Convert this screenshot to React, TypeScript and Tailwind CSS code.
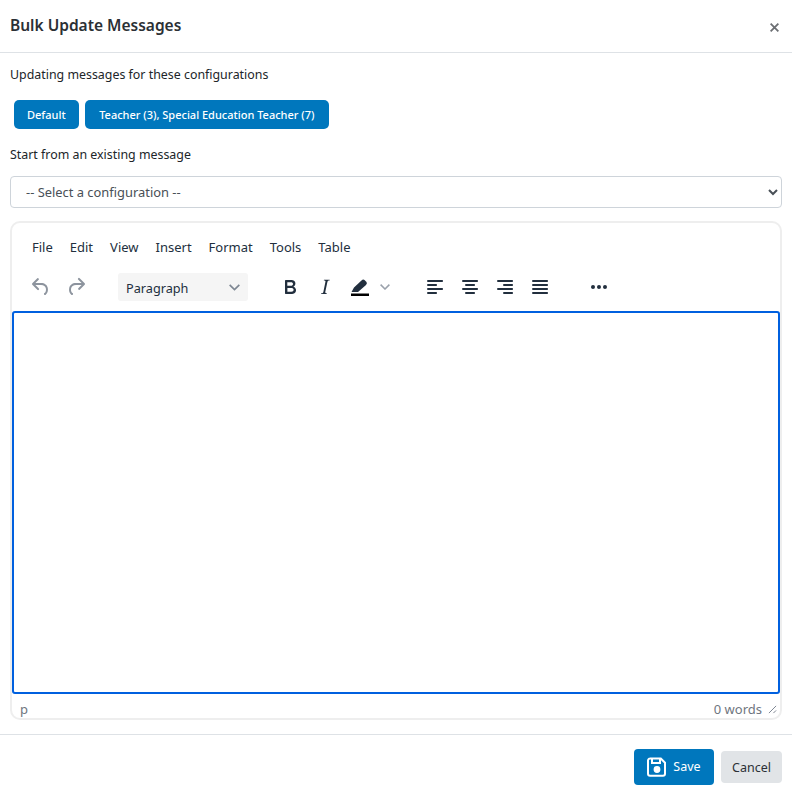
import React from "react";

const ICON_PATHS = {
  undo: "M6.4 8H12c3.7 0 6.2 2 6.8 5.1.6 2.7-.4 5.6-2.3 6.8a1 1 0 0 1-1-1.8c1.1-.6 1.8-2.7 1.4-4.6-.5-2.1-2.1-3.5-4.9-3.5H6.4l3.3 3.3a1 1 0 1 1-1.4 1.4l-5-5a1 1 0 0 1 0-1.4l5-5a1 1 0 0 1 1.4 1.4L6.4 8Z",
  redo: "M17.6 10H12c-2.8 0-4.4 1.4-4.9 3.5-.4 2 .3 4 1.4 4.6a1 1 0 1 1-1 1.8c-2-1.2-2.9-4.1-2.3-6.8.6-3 3-5.1 6.8-5.1h5.6l-3.3-3.3a1 1 0 1 1 1.4-1.4l5 5a1 1 0 0 1 0 1.4l-5 5a1 1 0 0 1-1.4-1.4l3.3-3.3Z",
  bold: "M7.8 19c-.3 0-.5 0-.6-.2l-.2-.5V5.7c0-.2 0-.4.2-.5l.6-.2h5c1.5 0 2.7.3 3.5 1 .7.6 1.1 1.4 1.1 2.5a3 3 0 0 1-.6 1.9c-.4.6-1 1-1.6 1.2.4.1.9.3 1.3.6s.8.7 1 1.2c.4.4.5 1 .5 1.6 0 1.3-.4 2.3-1.3 3-.8.7-2.1 1-3.8 1H7.8Zm5-8.3c.6 0 1.2-.1 1.6-.5.4-.3.6-.7.6-1.3 0-1.1-.8-1.7-2.3-1.7H9.3v3.5h3.4Zm.5 6c.7 0 1.3-.1 1.7-.4.4-.4.6-.9.6-1.5s-.2-1-.7-1.4c-.4-.3-1-.4-2-.4H9.4v3.8h4Z",
  italic: "M16.7 4.7l-.1.9h-.3c-.6 0-1 0-1.4.3-.3.3-.4.6-.5 1.1l-2.1 9.8v.6c0 .5.4.8 1.4.8h.2l-.2.8H8l.2-.8h.2c1.1 0 1.8-.5 2-1.5l2-9.8.1-.5c0-.6-.4-.8-1.4-.8h-.3l.2-.9h5.8Z",
  left: "M5 5h14c.6 0 1 .4 1 1s-.4 1-1 1H5a1 1 0 1 1 0-2Zm0 4h8c.6 0 1 .4 1 1s-.4 1-1 1H5a1 1 0 1 1 0-2Zm0 8h8c.6 0 1 .4 1 1s-.4 1-1 1H5a1 1 0 0 1 0-2Zm0-4h14c.6 0 1 .4 1 1s-.4 1-1 1H5a1 1 0 0 1 0-2Z",
  center: "M5 5h14c.6 0 1 .4 1 1s-.4 1-1 1H5a1 1 0 1 1 0-2Zm3 4h8c.6 0 1 .4 1 1s-.4 1-1 1H8a1 1 0 1 1 0-2Zm0 8h8c.6 0 1 .4 1 1s-.4 1-1 1H8a1 1 0 0 1 0-2Zm-3-4h14c.6 0 1 .4 1 1s-.4 1-1 1H5a1 1 0 0 1 0-2Z",
  right: "M5 5h14c.6 0 1 .4 1 1s-.4 1-1 1H5a1 1 0 1 1 0-2Zm6 4h8c.6 0 1 .4 1 1s-.4 1-1 1h-8a1 1 0 0 1 0-2Zm0 8h8c.6 0 1 .4 1 1s-.4 1-1 1h-8a1 1 0 0 1 0-2Zm-6-4h14c.6 0 1 .4 1 1s-.4 1-1 1H5a1 1 0 0 1 0-2Z",
  justify: "M5 5h14c.6 0 1 .4 1 1s-.4 1-1 1H5a1 1 0 1 1 0-2Zm0 4h14c.6 0 1 .4 1 1s-.4 1-1 1H5a1 1 0 1 1 0-2Zm0 4h14c.6 0 1 .4 1 1s-.4 1-1 1H5a1 1 0 0 1 0-2Zm0 4h14c.6 0 1 .4 1 1s-.4 1-1 1H5a1 1 0 0 1 0-2Z",
  more: "M6 10a2 2 0 0 0-2 2c0 1.1.9 2 2 2a2 2 0 0 0 2-2 2 2 0 0 0-2-2Zm12 0a2 2 0 0 0-2 2c0 1.1.9 2 2 2a2 2 0 0 0 2-2 2 2 0 0 0-2-2Zm-6 0a2 2 0 0 0-2 2c0 1.1.9 2 2 2a2 2 0 0 0 2-2 2 2 0 0 0-2-2Z",
};

const MENUS = ["File", "Edit", "View", "Insert", "Format", "Tools", "Table"];

const ToolIcon = ({ name, className }: { name: keyof typeof ICON_PATHS; className: string }) => (
  <svg viewBox="0 0 24 24" className={"w-6 h-6 shrink-0 fill-current " + className}>
    <path d={ICON_PATHS[name]} />
  </svg>
);

const Chevron = () => (
  <svg viewBox="0 0 10 6" className="w-[10px] h-[6px] shrink-0 fill-none stroke-[#9aa1ab] stroke-[1.5]">
    <path d="M.6.6 5 5 9.4.6" />
  </svg>
);

export default function App() {
  return (
    <div className="h-[793px] overflow-hidden bg-white text-[#212529] font-['Noto_Sans','Open_Sans',sans-serif]">
      {/* Header */}
      <div className="h-[53px] border-b border-[#dee2e6] flex items-start justify-between pl-[10px] pr-[13px]">
        <h2 className="mt-[13px] text-[15.5px] leading-[24px] font-semibold text-[#2b3035]">Bulk Update Messages</h2>
        <svg viewBox="0 0 10 10" className="mt-[23px] w-[9px] h-[9px] stroke-[#6c6f73] stroke-[2] fill-none">
          <path d="M.7.7l8.6 8.6M9.3.7.7 9.3" />
        </svg>
      </div>

      {/* Body */}
      <div className="h-[681px] px-[10px] flex flex-col">
        <p className="mt-[13px] text-[12.4px] leading-[18px]">Updating messages for these configurations</p>
        <div className="mt-[16px] pl-[4px] flex gap-[6px]">
          <span className="h-[29px] pt-[1px] px-[13px] rounded-[5px] bg-[#0077bd] text-white text-[11px] font-medium flex items-center">Default</span>
          <span className="h-[29px] pt-[1px] px-[14.5px] rounded-[5px] bg-[#0077bd] text-white text-[11px] font-medium flex items-center">Teacher (3), Special Education Teacher (7)</span>
        </div>
        <label className="mt-[17px] text-[12.4px] leading-[18px]">Start from an existing message</label>
        <select className="mt-[12px] w-full h-[32px] shrink-0 px-[11px] text-[12.9px] text-[#495057] bg-white border border-[#ced4da] rounded-[4px]">
          <option>-- Select a configuration --</option>
        </select>

        {/* Editor */}
        <div className="mt-[13px] h-[499px] border-2 border-[#eeeeee] rounded-[10px] flex flex-col">
          <div className="h-[88px] shrink-0">
            <div className="h-[52px] pl-[11.5px] flex items-start">
              {MENUS.map(menu => (
                <span key={menu} className="mt-[14px] px-[8.5px] text-[13px] leading-[20px] text-[#222f3e]">{menu}</span>
              ))}
            </div>
            <div className="h-[36px] flex items-start pl-[17px]">
              <ToolIcon name="undo" className="text-[#8d949e]" />
              <ToolIcon name="redo" className="ml-[11px] text-[#8d949e]" />
              <div className="ml-[30px] -mt-[2px] w-[130px] h-[28px] rounded-[3px] bg-[#f5f5f5] pl-[8px] pr-[8px] flex items-center justify-between">
                <span className="pt-[3px] text-[12.7px] text-[#222f3e]">Paragraph</span>
                <svg viewBox="0 0 10 6" className="w-[11px] h-[7px] fill-none stroke-[#7e8793] stroke-[1.5]">
                  <path d="M.6.6 5 5 9.4.6" />
                </svg>
              </div>
              <ToolIcon name="bold" className="ml-[30px] text-[#222f3e]" />
              <ToolIcon name="italic" className="ml-[11px] text-[#222f3e]" />
              <svg viewBox="0 0 24 24" className="ml-[11px] w-6 h-6 shrink-0">
                <path fill="#222f3e" d="M3.500 17 6 12.500 13.500 5.500Q15 4 16.500 5L18.500 7Q19.500 8.500 18 10L10 17H6.500Z" />
                <path fill="#000000" d="M3 18.500h18V21H3z" />
              </svg>
              <span className="ml-[8px] mt-[9px]"><Chevron /></span>
              <ToolIcon name="left" className="ml-[33px] text-[#222f3e]" />
              <ToolIcon name="center" className="ml-[11px] text-[#222f3e]" />
              <ToolIcon name="right" className="ml-[11px] text-[#222f3e]" />
              <ToolIcon name="justify" className="ml-[11px] text-[#222f3e]" />
              <ToolIcon name="more" className="ml-[35px] text-[#222f3e]" />
            </div>
          </div>
          <div className="h-[383px] shrink-0 border-2 border-[#0060df] rounded-[3px] bg-white" />
          <div className="flex-1 flex items-center justify-between pt-[6px] pl-[8px] pr-[3px] text-[13px] text-[#6f7680]">
            <span>p</span>
            <span className="flex items-center gap-[6px]">
              0 words
              <svg viewBox="0 0 10 10" className="w-[9px] h-[9px] stroke-[#7e8793] stroke-[1.1] fill-none">
                <path d="M1 9 9 1M6 9l3-3" />
              </svg>
            </span>
          </div>
        </div>
      </div>

      {/* Footer */}
      <div className="border-t border-[#dee2e6] pt-[14px] pr-[10px] flex justify-end items-center gap-[7px]">
        <button className="w-[80px] h-[36px] rounded-[4px] bg-[#0077bd] text-white text-[12.5px] flex items-center justify-center gap-[6px]">
          <svg viewBox="0 0 20 20" className="w-[20px] h-[20px] fill-none stroke-white stroke-[2]">
            <path d="M2.800 1.500h11l4.200 4.200v11a2 2 0 0 1-2 2H3a2 2 0 0 1-2-2V3.500a2 2 0 0 1 2-2Z" />
            <path d="M5 2v4h8V2" />
            <circle cx="10" cy="12.500" r="2.400" fill="#ffffff" />
          </svg>
          <span className="pt-[1px]">Save</span>
        </button>
        <button className="w-[61px] h-[32px] pt-[2px] rounded-[4px] bg-[#e1e4e7] text-[#2b3035] text-[12.5px]">Cancel</button>
      </div>
    </div>
  );
}
